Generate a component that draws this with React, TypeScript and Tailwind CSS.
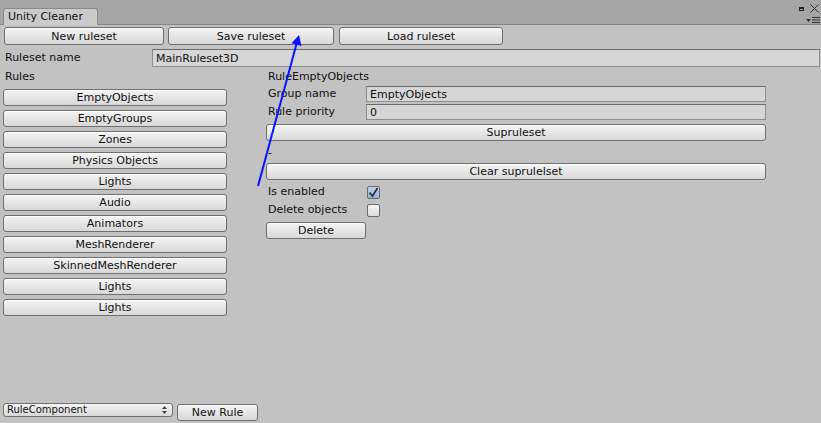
import React from "react";

const btn =
  "flex items-center justify-center rounded-[3px] border border-[#6f6f6f] bg-gradient-to-b from-[#f4f4f4] to-[#d8d8d8] text-[11px] leading-none text-[#111] shadow-[inset_0_1px_0_#ffffff]";

const field =
  "flex items-center border border-[#8f8f8f] border-t-[#6c6c6c] bg-[#d6d6d6] pl-[3px] text-[11px] leading-none text-[#111]";

function Btn({ label, className }: { label: string; className: string }) {
  return <div className={`${btn} ${className}`}>{label}</div>;
}

function FieldRow({ label, value, top }: { label: string; value: string; top: string }) {
  return (
    <div className={`flex h-[16px] items-center ${top}`}>
      <span className="w-[100px] shrink-0 pl-[2px] text-[11px]">{label}</span>
      <div className={`${field} h-[16px] w-[400px] shrink-0`}>{value}</div>
    </div>
  );
}

function Check({ on }: { on: boolean }) {
  return (
    <div
      className={`flex h-[13px] w-[13px] items-center justify-center rounded-[2px] border border-[#6a6a6a] ${
        on ? "bg-gradient-to-b from-[#c6d2e6] to-[#9eb1d2]" : "bg-gradient-to-b from-[#f6f6f6] to-[#dcdcdc]"
      }`}
    >
      {on && (
        <svg width="11" height="11" viewBox="0 0 11 11">
          <path d="M1.5 5.5 L4.5 9 L9.5 1" fill="none" stroke="#26344f" strokeWidth="1.8" />
        </svg>
      )}
    </div>
  );
}

const rules = [
  "EmptyObjects",
  "EmptyGroups",
  "Zones",
  "Physics Objects",
  "Lights",
  "Audio",
  "Animators",
  "MeshRenderer",
  "SkinnedMeshRenderer",
  "Lights",
  "Lights",
];

export default function App() {
  return (
    <div
      className="relative flex h-[423px] w-[821px] flex-col overflow-hidden bg-[#c2c2c2] text-[#111]"
      style={{ fontFamily: '"DejaVu Sans", sans-serif' }}
    >
      {/* title strip with tab */}
      <div className="relative flex h-[25px] shrink-0 items-end border-b border-[#858585] bg-[#a5a5a5] pl-[3px]">
        <div className="mb-[-1px] flex h-[17px] w-[95px] items-center rounded-t-[3px] border border-b-0 border-[#8a8a8a] bg-[#cbcbcb] pl-[4px] text-[11px]">
          Unity Cleaner
        </div>
        <div className="absolute right-[2px] top-[4px] flex items-start gap-[6px]">
          <div className="mt-[3px] h-[4px] w-[5px] border border-[#222] border-t-[2px]" />
          <svg width="9" height="9" viewBox="0 0 9 9">
            <path d="M0.5 0.5 L8.5 8.5 M8.5 0.5 L0.5 8.5" stroke="#333" strokeWidth="1" />
          </svg>
        </div>
        <div className="absolute right-[1px] top-[17px] flex items-center gap-[1px]">
          <svg width="5" height="3" viewBox="0 0 5 3">
            <path d="M0 0 H5 L2.5 3 Z" fill="#333" />
          </svg>
          <svg width="8" height="6" viewBox="0 0 8 6">
            <path d="M0 0.5 H8 M0 3 H8 M0 5.5 H8" stroke="#333" strokeWidth="1" />
          </svg>
        </div>
      </div>

      {/* top buttons */}
      <div className="mt-[2px] flex h-[18px] pl-[4px]">
        <Btn label="New ruleset" className="w-[160px]" />
        <Btn label="Save ruleset" className="ml-[4px] w-[166px]" />
        <Btn label="Load ruleset" className="ml-[5px] w-[164px]" />
      </div>

      {/* ruleset name */}
      <div className="mt-[4px] flex h-[18px] items-center">
        <span className="w-[152px] pl-[5px] text-[11px]">Ruleset name</span>
        <div className={`${field} h-[18px] w-[668px]`}>MainRuleset3D</div>
      </div>

      <div className="flex flex-1">
        {/* rules list */}
        <div className="flex w-[262px] flex-col pl-[3px]">
          <div className="mt-[3px] pl-[2px] text-[11px] leading-[14px]">Rules</div>
          <div className="mt-[5px] flex flex-col gap-[4px]">
            {rules.map((r, i) => (
              <Btn key={i} label={r} className="h-[17px] w-[224px]" />
            ))}
          </div>
        </div>

        {/* rule details */}
        <div className="flex w-[504px] flex-col pl-[4px]">
          <div className="mt-[3px] pl-[2px] text-[11px] leading-[14px]">RuleEmptyObjects</div>
          <FieldRow label="Group name" value="EmptyObjects" top="mt-[2px]" />
          <FieldRow label="Rule priority" value="0" top="mt-[2px]" />
          <Btn label="Supruleset" className="mt-[4px] h-[17px] w-[500px]" />
          <div className="mt-[4px] h-[16px] pl-[2px] text-[11px] leading-[16px]">-</div>
          <Btn label="Clear suprulelset" className="mt-[2px] h-[17px] w-[500px]" />
          <div className="mt-[5px] flex h-[14px] items-center">
            <span className="w-[101px] pl-[2px] text-[11px]">Is enabled</span>
            <Check on />
          </div>
          <div className="mt-[4px] flex h-[14px] items-center">
            <span className="w-[101px] pl-[2px] text-[11px]">Delete objects</span>
            <Check on={false} />
          </div>
          <Btn label="Delete" className="mt-[5px] h-[17px] w-[100px]" />
        </div>
      </div>

      {/* bottom bar */}
      <div className="mb-[2px] flex items-end pl-[3px]">
        <div className="mb-[4px] flex h-[14px] w-[170px] items-center justify-between rounded-[3px] border border-[#707070] bg-gradient-to-b from-[#f4f4f4] to-[#d8d8d8] px-[3px] text-[10px] leading-none">
          <span>RuleComponent</span>
          <svg width="5" height="8" viewBox="0 0 5 8" className="mr-[2px]">
            <path d="M0 3 L2.5 0 L5 3 Z M0 5 L2.5 8 L5 5 Z" fill="#444" />
          </svg>
        </div>
        <Btn label="New Rule" className="ml-[4px] h-[17px] w-[81px]" />
      </div>

      {/* annotation arrow */}
      <svg className="pointer-events-none absolute left-0 top-0" width="821" height="423">
        <line x1="258" y1="186" x2="296.5" y2="44" stroke="#0a14ff" strokeWidth="2" />
        <path d="M299 35 L301.5 46 L291.5 43.3 Z" fill="#0a14ff" />
      </svg>
    </div>
  );
}
